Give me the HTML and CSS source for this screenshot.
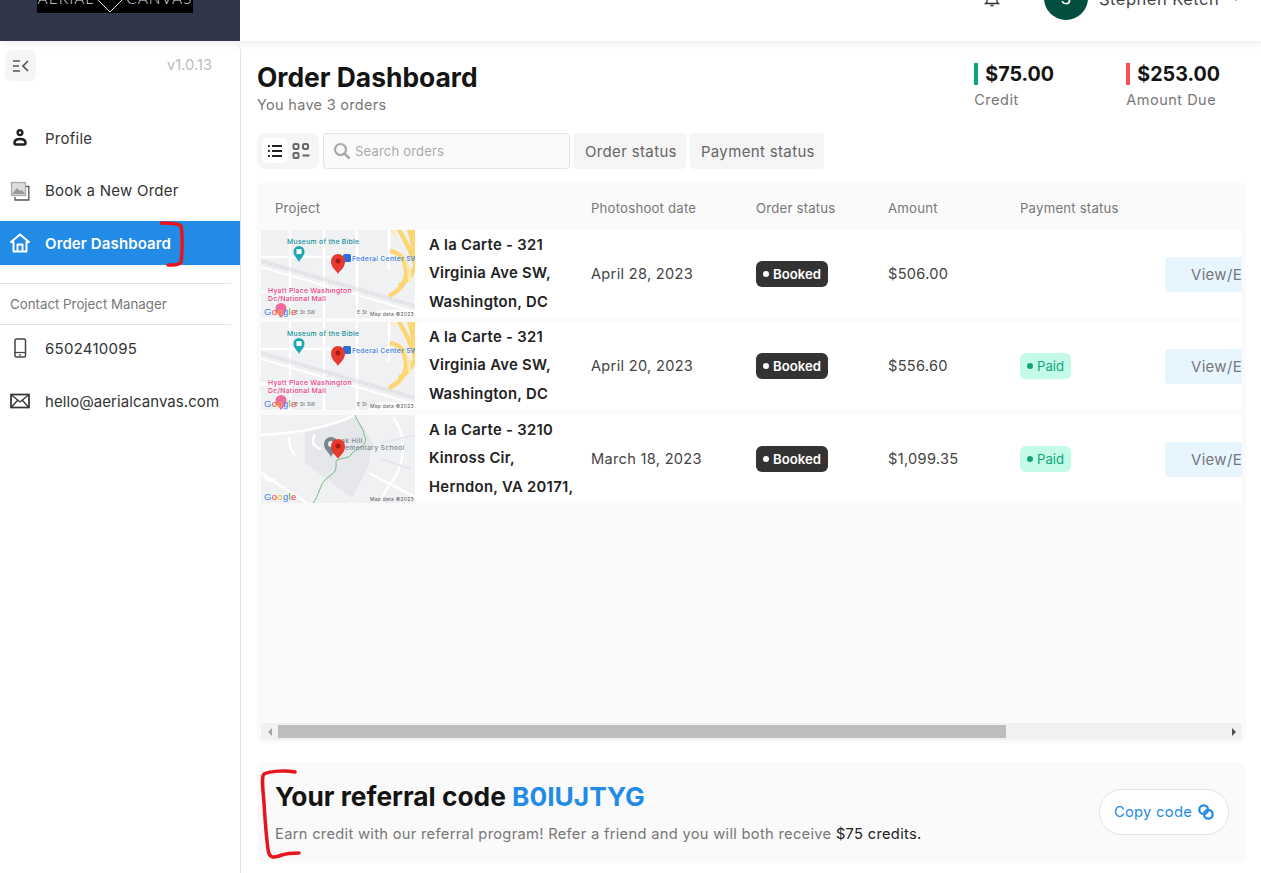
FILE: index.html
```html
<!DOCTYPE html>
<html lang="en">
<head>
    <meta charset="UTF-8">
    <meta name="viewport" content="width=device-width, initial-scale=1.0">
    <title>Order Dashboard</title>
    <link rel="stylesheet" href="styles.css">
</head>
<body>

<svg class="defs" width="0" height="0">
    <symbol id="map-bible" viewBox="0 0 154 88">
        <rect width="154" height="88" fill="#f0f1f3"/>
        <g fill="none" stroke="#fff">
            <path d="M0 27H130M0 62H40M29 0V88M63 0V88M96 0V88M128 0V40" stroke-width="2.500"/>
            <path d="M0 31L154 76" stroke-width="4" stroke="#dcdde0" stroke-dasharray="1.500 1"/>
            <path d="M0 37L154 82" stroke-width="2"/>
        </g>
        <path d="M146 0H154V44C152 28 150 12 146 0Z" fill="#fcd672"/>
        <g fill="none" stroke="#fcd672" stroke-width="4.500">
            <path d="M137 -2C145 12 152 24 156 42"/>
            <path d="M129 21C139 22 144 30 145 40 146 52 140 60 128 66"/>
            <path d="M138 56C148 50 152 44 156 30"/>
        </g>
        <path d="M129 0H132L150 40V52H147C146 30 140 12 129 0Z" fill="#fde9ad"/>
        <text x="26" y="14" class="map-text" fill="#14929a">Museum of the Bible</text>
        <path d="M38 16a5.500 5.500 0 0 1 5.500 5.500C43.500 26 40 28 38 32 36 28 32.500 26 32.500 21.500A5.500 5.500 0 0 1 38 16Z" fill="#1ba9b5"/>
        <rect x="35.500" y="19" width="5" height="5" fill="#fff"/>
        <rect x="82" y="24" width="8" height="8" rx="1.500" fill="#2a6fdc"/>
        <text x="91" y="30.500" class="map-text" fill="#3d7fe0">Federal Center SW</text>
        <text x="7" y="63" class="map-text" fill="#ea3f8b">Hyatt Place Washington</text>
        <text x="7" y="71" class="map-text" fill="#ea3f8b">Dc/National Mall</text>
        <path d="M20 73a5.500 5.500 0 0 1 5.500 5.500C25.500 83 22 85 20 88 18 85 14.500 83 14.500 78.500A5.500 5.500 0 0 1 20 73Z" fill="#f06a9f"/>
        <text x="34" y="84" class="map-small" fill="#666">E St SW</text>
        <text x="96" y="84" class="map-small" fill="#666">E St SW</text>
        <rect x="108" y="80" width="46" height="8" fill="#fff" opacity=".75"/>
        <text x="109" y="86" class="map-small" fill="#555">Map data ©2023</text>
        <text x="3" y="85" class="map-google"><tspan fill="#4285f4">G</tspan><tspan fill="#ea4335">o</tspan><tspan fill="#fbbc05">o</tspan><tspan fill="#4285f4">g</tspan><tspan fill="#34a853">l</tspan><tspan fill="#ea4335">e</tspan></text>
        <path d="M77 24a7 7 0 0 1 7 7C84 38 79 40 77 44 75 40 70 38 70 31A7 7 0 0 1 77 24Z" fill="#e53a2f"/>
        <circle cx="77" cy="31" r="2.500" fill="#a31c15"/>
    </symbol>
    <symbol id="map-kinross" viewBox="0 0 154 88">
        <rect width="154" height="88" fill="#f0f1f3"/>
        <path d="M44 18L94 0 112 28 107 52 91 83 44 48Z" fill="#e6e7ea"/>
        <g fill="none" stroke="#fff" stroke-width="2.500">
            <path d="M0 20C40 18 70 12 94 0"/>
            <path d="M132 2C146 20 146 50 127 72L118 88"/>
            <path d="M28 22C28 30 30 36 34 40M54 20C50 26 52 32 60 34"/>
            <path d="M0 58L46 88M108 58L154 82"/>
            <path d="M4 58C2 64 8 68 14 64"/>
        </g>
        <path d="M120 28L154 20M120 44L150 54" stroke="#e6e7ea" stroke-width="2" fill="none"/>
        <path d="M94 0C98 10 103 14 103 20 108 28 100 32 91 38 90 44 80 42 75 46 75 52 76 56 70 60 62 66 60 70 60 72 56 80 56 84 52 88" fill="none" stroke="#6fbb83" stroke-width="1"/>
        <text x="80" y="28" class="map-text" fill="#7a8a94">ak Hill</text>
        <text x="84" y="35" class="map-text" fill="#7a8a94">ementary School</text>
        <path d="M70 22a7 7 0 0 1 7 7C77 35 72 37 70 42 68 37 63 35 63 29A7 7 0 0 1 70 22Z" fill="#77858f"/>
        <circle cx="70" cy="29" r="3" fill="#f0f1f3"/>
        <text x="109" y="86" class="map-small" fill="#555">Map data ©2023</text>
        <text x="3" y="85" class="map-google"><tspan fill="#4285f4">G</tspan><tspan fill="#ea4335">o</tspan><tspan fill="#fbbc05">o</tspan><tspan fill="#4285f4">g</tspan><tspan fill="#34a853">l</tspan><tspan fill="#ea4335">e</tspan></text>
        <path d="M77 24a7 7 0 0 1 7 7C84 38 79 40 77 44 75 40 70 38 70 31A7 7 0 0 1 77 24Z" fill="#e53a2f"/>
        <circle cx="77" cy="31" r="2.500" fill="#a31c15"/>
    </symbol>
</svg>

<header class="topbar">
    <div class="brand">
        <div class="logo">
            <span>AERIAL</span>
            <svg width="26" height="20" viewBox="0 0 26 20"><path d="M0 5L13 18 26 5" fill="none" stroke="#ddd" stroke-width="1"/></svg>
            <span>CANVAS</span>
        </div>
    </div>
    <div class="account">
        <svg class="bell" width="18" height="18" viewBox="0 0 18 18"><path d="M4 13V8a5 5 0 0 1 10 0v5l1.500 1.500h-13ZM7.500 16.500h3" fill="none" stroke="#333" stroke-width="1.300"/></svg>
        <div class="avatar">S</div>
        <span class="account-name">Stephen Ketch</span>
        <svg width="10" height="6" viewBox="0 0 10 6"><path d="M1 1l4 4 4-4" fill="none" stroke="#666" stroke-width="1.300"/></svg>
    </div>
</header>

<div class="layout">
    <aside class="sidebar">
        <div class="sidebar-top">
            <button class="collapse-btn">
                <svg width="18" height="14" viewBox="0 0 18 14"><path d="M1 2h7M1 7h6M1 12h7" fill="none" stroke="#555" stroke-width="1.700"/><path d="M16 2l-5 5 5 5" fill="none" stroke="#555" stroke-width="1.700"/></svg>
            </button>
            <span class="version">v1.0.13</span>
        </div>
        <nav class="nav">
            <a class="nav-item">
                <svg width="20" height="20" viewBox="0 0 20 20"><circle cx="10" cy="4.600" r="2.400" fill="none" stroke="#222" stroke-width="2.400"/><path d="M4.500 15c0-2.800 2.300-4 5.500-4s5.500 1.200 5.500 4c0 1-.7 1.500-1.500 1.500H6c-.8 0-1.500-.5-1.500-1.500Z" fill="none" stroke="#222" stroke-width="2.600"/></svg>
                Profile
            </a>
            <a class="nav-item">
                <svg width="20" height="20" viewBox="0 0 20 20"><path d="M15 5.500h3.800v13.500H5V16" fill="none" stroke="#555" stroke-width="1.300"/><rect x="1.500" y="1.500" width="14" height="13" fill="#ddd" stroke="#aaa" stroke-width="1.300"/><path d="M2 13l5-6 3 3 2-1 3 4Z" fill="#999"/></svg>
                Book a New Order
            </a>
            <a class="nav-item active">
                <svg width="20" height="20" viewBox="0 0 20 20"><path d="M10 1.500L1 9h2.500v9.500h13V9H19ZM7.500 18.500V11.500h5v7" fill="none" stroke="#fff" stroke-width="2" stroke-linejoin="round"/></svg>
                Order Dashboard
            </a>
        </nav>
        <div class="contact-title">Contact Project Manager</div>
        <div class="contact">
            <a class="nav-item">
                <svg width="20" height="20" viewBox="0 0 20 20"><rect x="5" y="1" width="10.500" height="18" rx="1.500" fill="none" stroke="#444" stroke-width="1.500"/><path d="M5 14.500h10" stroke="#444" stroke-width="1.200"/><path d="M9 16.800h2" stroke="#444" stroke-width="1.200"/></svg>
                6502410095
            </a>
            <a class="nav-item nav-email">
                <svg width="20" height="20" viewBox="0 0 20 20"><rect x="1" y="3.500" width="18" height="13" fill="none" stroke="#333" stroke-width="1.700"/><path d="M1.500 4l8.500 7 8.500-7M1.500 16l6-6.500M18.500 16l-6-6.500" fill="none" stroke="#333" stroke-width="1.300"/></svg>
                hello@aerialcanvas.com
            </a>
        </div>
    </aside>

    <main class="main">
        <div class="page-head">
            <div>
                <h1 class="page-title">Order Dashboard</h1>
                <p class="page-sub">You have 3 orders</p>
            </div>
            <div class="stats">
                <div class="stat stat-credit">
                    <div class="stat-value">$75.00</div>
                    <div class="stat-label">Credit</div>
                </div>
                <div class="stat stat-due">
                    <div class="stat-value">$253.00</div>
                    <div class="stat-label">Amount Due</div>
                </div>
            </div>
        </div>

        <div class="toolbar">
            <div class="view-toggle">
                <span class="view-btn active">
                    <svg width="16" height="14" viewBox="0 0 16 14"><path d="M5 2h10M5 7h10M5 12h10" stroke="#222" stroke-width="1.900"/><path d="M1 2h1.800M1 7h1.800M1 12h1.800" stroke="#222" stroke-width="2.200"/></svg>
                </span>
                <span class="view-btn">
                    <svg width="18" height="18" viewBox="0 0 18 18"><g fill="none" stroke="#666" stroke-width="2"><rect x="1.500" y="2" width="5" height="5" rx="1.500"/><rect x="11" y="2" width="5" height="5" rx="1.500"/><rect x="1.500" y="11" width="5" height="5" rx="1"/><path d="M10.500 13.500h7"/></g></svg>
                </span>
            </div>
            <div class="search">
                <svg width="18" height="18" viewBox="0 0 18 18"><circle cx="7.500" cy="7.500" r="5.500" fill="none" stroke="#aaa" stroke-width="2.200"/><path d="M11.500 11.500l5 5" stroke="#aaa" stroke-width="2.500"/></svg>
                <span>Search orders</span>
            </div>
            <button class="filter-btn">Order status</button>
            <button class="filter-btn">Payment status</button>
        </div>

        <section class="orders">
            <div class="orders-scroll">
                <div class="row row-head">
                    <div class="cell-project">Project</div>
                    <div class="cell-date">Photoshoot date</div>
                    <div class="cell-status">Order status</div>
                    <div class="cell-amount">Amount</div>
                    <div class="cell-pay">Payment status</div>
                </div>
                <div class="row order">
                    <svg class="thumb" width="154" height="88"><use href="#map-bible"/></svg>
                    <div class="order-name">A la Carte - 321 Virginia Ave SW, Washington, DC</div>
                    <div class="cell-date">April 28, 2023</div>
                    <div class="cell-status"><span class="badge booked">Booked</span></div>
                    <div class="cell-amount">$506.00</div>
                    <div class="cell-pay"></div>
                    <button class="view-edit">View/Edit</button>
                </div>
                <div class="row order">
                    <svg class="thumb" width="154" height="88"><use href="#map-bible"/></svg>
                    <div class="order-name">A la Carte - 321 Virginia Ave SW, Washington, DC</div>
                    <div class="cell-date">April 20, 2023</div>
                    <div class="cell-status"><span class="badge booked">Booked</span></div>
                    <div class="cell-amount">$556.60</div>
                    <div class="cell-pay"><span class="badge paid">Paid</span></div>
                    <button class="view-edit">View/Edit</button>
                </div>
                <div class="row order">
                    <svg class="thumb" width="154" height="88"><use href="#map-kinross"/></svg>
                    <div class="order-name">A la Carte - 3210 Kinross Cir, Herndon, VA 20171, USA</div>
                    <div class="cell-date">March 18, 2023</div>
                    <div class="cell-status"><span class="badge booked">Booked</span></div>
                    <div class="cell-amount">$1,099.35</div>
                    <div class="cell-pay"><span class="badge paid">Paid</span></div>
                    <button class="view-edit">View/Edit</button>
                </div>
            </div>
            <div class="scrollbar">
                <span class="arrow arrow-left"></span>
                <span class="scroll-track"><span class="scroll-thumb"></span></span>
                <span class="arrow arrow-right"></span>
            </div>
        </section>

        <section class="referral">
            <div class="referral-info">
                <h2 class="referral-title">Your referral code <span class="referral-code">B0IUJTYG</span></h2>
                <p class="referral-text">Earn credit with our referral program! Refer a friend and you will both receive <span class="referral-amount">$75 credits.</span></p>
            </div>
            <button class="copy-btn">
                Copy code
                <svg width="16" height="16" viewBox="0 0 17 17"><g fill="none" stroke="#228be6" stroke-width="2.400"><circle cx="6" cy="6" r="4.600"/><rect x="6.500" y="6.500" width="9" height="9" rx="4"/></g></svg>
            </button>
        </section>
    </main>
</div>

<!-- red marks drawn over the screenshot -->
<svg class="mark mark-nav" width="26" height="48" viewBox="0 0 26 48"><path d="M1 2C8 2 18 2 21 5 23 14 22 34 21 41 19 45 12 44 8 44" fill="none" stroke="#e8141c" stroke-width="3.500" stroke-linecap="round"/></svg>
<svg class="mark mark-referral" width="44" height="92" viewBox="0 0 44 92"><path d="M35 3C26 1 10 2 4 5 1 8 3 20 4 34 5 50 6 66 8 80 9 90 14 89 22 86 28 84 34 84 39 84" fill="none" stroke="#e8141c" stroke-width="3.500" stroke-linecap="round"/></svg>

</body>
</html>
```

FILE: styles.css
```css
* {
    box-sizing: border-box;
}
html, body {
    height: 100%;
}
body {
    margin: 0;
    position: relative;
    display: flex;
    flex-direction: column;
    overflow: hidden;
    font-family: Inter, "Liberation Sans", sans-serif;
    color: #1a1a1a;
    background-color: #fff;
}
button {
    font-family: inherit;
    border: none;
    cursor: pointer;
}
.defs {
    position: absolute;
}
.map-text {
    font-family: Inter, sans-serif;
    font-size: 6.800px;
    font-weight: 500;
}
.map-small {
    font-family: Inter, sans-serif;
    font-size: 4.900px;
}
.map-google {
    font-family: "Liberation Sans", sans-serif;
    font-size: 9.500px;
}

/* top bar, the page is scrolled a little so its top is cut off */
.topbar {
    flex: none;
    height: 41px;
    display: flex;
    overflow: hidden;
    box-shadow: 0 2px 8px rgba(0, 0, 0, 0.08);
    position: relative;
    z-index: 2;
}
.brand {
    width: 240px;
    padding-left: 37px;
    background-color: #31364a;
}
.logo {
    width: 156px;
    height: 33px;
    margin-top: -20px;
    padding-top: 8px;
    display: flex;
    justify-content: center;
    gap: 3px;
    background-color: #000;
    color: #ddd;
    font-family: Lato, sans-serif;
    font-size: 15.500px;
    font-weight: 300;
    letter-spacing: 1px;
    line-height: 20px;
}
.logo svg {
    margin-top: 6px;
}
.account {
    flex: 1;
    display: flex;
    align-items: center;
    height: 44px;
    margin-top: -24px;
    padding-left: 743px;
    color: #444;
}
.bell {
    margin-right: 43px;
}
.avatar {
    width: 44px;
    height: 44px;
    flex: none;
    border-radius: 50%;
    background-color: #024e3f;
    color: #fff;
    font-size: 16px;
    text-align: center;
    line-height: 44px;
}
.account-name {
    margin: 1px 12px 0 11px;
    font-size: 16.500px;
    white-space: nowrap;
    letter-spacing: 0.5px;
}

.layout {
    flex: 1;
    min-height: 0;
    display: flex;
}

/* sidebar */
.sidebar {
    width: 241px;
    flex: none;
    border-right: 1px solid #e3e3e3;
    border-top-right-radius: 10px;
}
.sidebar-top {
    height: 75px;
    padding: 9px 28px 0 5px;
    display: flex;
    justify-content: space-between;
    align-items: flex-start;
}
.collapse-btn {
    width: 31px;
    height: 31px;
    padding: 0;
    display: flex;
    align-items: center;
    justify-content: center;
    border-radius: 6px;
    background-color: #f5f5f5;
}
.version {
    margin-top: 6px;
    font-size: 14.700px;
    color: #bbb;
}
.nav, .contact {
    display: flex;
    flex-direction: column;
    gap: 8.500px;
}
.contact {
    gap: 9px;
}
.nav-item {
    height: 44px;
    display: flex;
    align-items: center;
    gap: 15px;
    padding-left: 10px;
    font-size: 15px;
    letter-spacing: 0.25px;
    color: #333;
}
.nav-item.active {
    background-color: #228be6;
    color: #fff;
    font-weight: 600;
    letter-spacing: 0.12px;
}
.nav-email {
    letter-spacing: 0.07px;
}
.contact-title {
    width: 231px;
    height: 42px;
    margin-top: 18px;
    padding-left: 10px;
    border-top: 1px solid #e3e3e3;
    border-bottom: 1px solid #e3e3e3;
    font-size: 13.300px;
    line-height: 40px;
    color: #777;
}
.contact {
    margin-top: 1px;
}

/* main column */
.main {
    flex: 1;
    min-width: 0;
    padding: 0 15px 10px 16px;
    display: flex;
    flex-direction: column;
}
.page-head {
    height: 92px;
    padding-top: 20px;
    display: flex;
    justify-content: space-between;
}
.page-title {
    margin: 0;
    font-size: 26.400px;
    line-height: 32px;
    font-weight: 700;
    color: #141414;
}
.page-sub {
    margin: 3px 0 0;
    font-size: 14.500px;
    letter-spacing: 0.3px;
    color: #777;
}
.stats {
    display: flex;
    padding-top: 2px;
    padding-right: 26px;
}
.stat-credit {
    width: 152px;
}
.stat-value {
    height: 22px;
    padding-left: 7px;
    border-left: 4px solid;
    font-size: 19.700px;
    font-weight: 700;
    line-height: 22px;
    color: #141414;
}
.stat-credit .stat-value {
    border-color: #0ca678;
    width: 90px;
}
.stat-due .stat-value {
    border-color: #fa5252;
}
.stat-label {
    margin-top: 6px;
    font-size: 14.500px;
    letter-spacing: 0.5px;
    color: #777;
}

.toolbar {
    display: flex;
    gap: 4px;
    height: 36px;
}
.view-toggle {
    width: 62px;
    padding: 5px;
    display: flex;
    gap: 1px;
    border-radius: 8px;
    background-color: #f5f5f5;
}
.view-btn {
    width: 26px;
    height: 25px;
    display: flex;
    align-items: center;
    justify-content: center;
    border-radius: 5px;
}
.view-btn.active {
    background-color: #fff;
}
.search {
    width: 247px;
    display: flex;
    align-items: center;
    gap: 4px;
    padding-left: 9px;
    border: 1px solid #e3e3e3;
    border-radius: 4px;
    background-color: #fafafa;
    font-size: 13px;
    letter-spacing: 0.2px;
    color: #aaa;
}
.filter-btn {
    padding: 0 9px 0 11px;
    border-radius: 4px;
    background-color: #f5f5f5;
    font-size: 15px;
    letter-spacing: 0.35px;
    color: #666;
}

/* orders table */
.orders {
    height: 561px;
    margin-top: 13px;
    padding: 0 4px 3px;
    display: flex;
    flex-direction: column;
    justify-content: space-between;
    border-radius: 8px;
    background-color: #fafafa;
}
.orders-scroll {
    overflow: hidden;
}
.row {
    width: 1120px;
    display: flex;
    align-items: center;
}
.row-head {
    height: 48px;
    padding-top: 4px;
    font-size: 13.200px;
    letter-spacing: 0.2px;
    color: #777;
}
.cell-project {
    width: 330px;
    padding-left: 14px;
}
.cell-date {
    width: 165px;
    flex: none;
}
.cell-status {
    width: 132px;
    flex: none;
}
.cell-amount {
    width: 132px;
    flex: none;
}
.cell-pay {
    width: 145px;
    flex: none;
}
.order {
    height: 88px;
    margin-bottom: 4px;
    background-color: #fff;
    font-size: 14.600px;
    letter-spacing: 0.3px;
    color: #444;
}
.order:nth-child(3) {
    margin-bottom: 5px;
}
.order:nth-child(2) .cell-date,
.order:nth-child(2) .cell-amount,
.order:nth-child(4) .cell-date,
.order:nth-child(4) .cell-amount {
    padding-bottom: 1px;
}
.thumb {
    flex: none;
}
.order-name {
    width: 176px;
    height: 88px;
    flex: none;
    padding: 0.500px 10px 0 14px;
    overflow: hidden;
    font-size: 14.800px;
    font-weight: 600;
    line-height: 28.500px;
    color: #222;
}
.badge {
    display: inline-flex;
    align-items: center;
    gap: 4px;
    height: 26px;
    padding: 0 7px 0 7px;
    border-radius: 6px;
    font-size: 13.200px;
    letter-spacing: 0;
}
.badge::before {
    content: "";
    width: 6px;
    height: 6px;
    border-radius: 50%;
    background-color: currentColor;
}
.booked {
    background-color: #333;
    color: #fff;
    font-weight: 600;
}
.paid {
    background-color: #c3fae8;
    color: #0ca678;
}
.view-edit {
    width: 120px;
    height: 35px;
    flex: none;
    padding-left: 26px;
    text-align: left;
    border-radius: 4px;
    background-color: #e7f5ff;
    font-size: 15px;
    letter-spacing: 0.3px;
    color: #777;
}

.scrollbar {
    height: 17px;
    display: flex;
    align-items: center;
    background-color: #f1f1f1;
}
.arrow {
    width: 17px;
    flex: none;
    display: flex;
    justify-content: center;
}
.arrow::before {
    content: "";
    border: 4px solid transparent;
}
.arrow-left::before {
    border-right-color: #a3a3a3;
    margin-right: 4px;
}
.arrow-right::before {
    border-left-color: #505050;
    margin-left: 4px;
}
.scroll-track {
    flex: 1;
    height: 13px;
}
.scroll-thumb {
    display: block;
    width: 728px;
    height: 13px;
    background-color: #bdbdbd;
}

/* referral */
.referral {
    height: 101px;
    margin-top: 19px;
    padding: 0 17px 1px 18px;
    display: flex;
    align-items: center;
    justify-content: space-between;
    border-radius: 8px;
    background-color: #fafafa;
}
.referral-info {
    padding-bottom: 1px;
}
.referral-title {
    margin: 0;
    font-size: 26.300px;
    line-height: 32px;
    font-weight: 700;
    color: #141414;
}
.referral-code {
    color: #228be6;
}
.referral-text {
    margin: 12px 0 0;
    font-size: 14.700px;
    letter-spacing: 0.3px;
    color: #777;
}
.referral-amount {
    color: #222;
}
.copy-btn {
    width: 130px;
    height: 46px;
    display: flex;
    align-items: center;
    justify-content: center;
    gap: 6px;
    border: 1px solid #e3e3e3;
    border-radius: 23px;
    background-color: #fff;
    font-size: 14.700px;
    letter-spacing: 0.3px;
    color: #228be6;
}

.mark {
    position: absolute;
    z-index: 3;
}
.mark-nav {
    left: 160px;
    top: 221px;
}
.mark-referral {
    left: 260px;
    top: 769px;
}
```
